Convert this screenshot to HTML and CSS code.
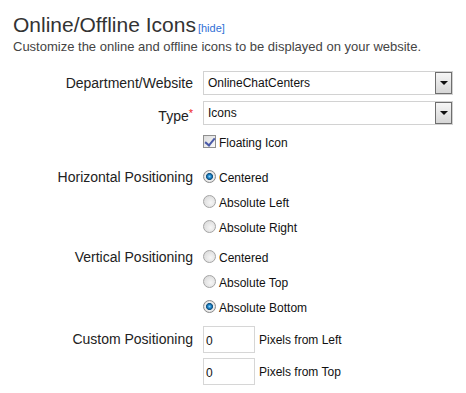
FILE: index.html
```html
<!DOCTYPE html>
<html lang="en">
<head>
  <meta charset="UTF-8" />
  <title>Online/Offline Icons</title>
  <link rel="stylesheet" href="styles.css">
</head>
<body>
  <div class="page">
    <h1>Online/Offline Icons<a href="#" class="hide-link">[hide]</a></h1>
    <p class="subtext">Customize the online and offline icons to be displayed on your website.</p>

    <form class="form">
      <div class="row select-row">
        <label class="label" for="dept">Department/Website</label>
        <div class="select">
          <select id="dept"><option>OnlineChatCenters</option></select>
          <span class="select-btn"></span>
        </div>
      </div>

      <div class="row select-row">
        <label class="label" for="type">Type<span class="req">*</span></label>
        <div class="select">
          <select id="type"><option>Icons</option></select>
          <span class="select-btn"></span>
        </div>
      </div>

      <div class="row check-row">
        <span class="label"></span>
        <label class="option"><input type="checkbox" checked> Floating Icon</label>
      </div>

      <div class="row group">
        <span class="label">Horizontal Positioning</span>
        <div class="options">
          <label class="option"><input type="radio" name="hpos" checked> Centered</label>
          <label class="option"><input type="radio" name="hpos"> Absolute Left</label>
          <label class="option"><input type="radio" name="hpos"> Absolute Right</label>
        </div>
      </div>

      <div class="row group vgroup">
        <span class="label">Vertical Positioning</span>
        <div class="options">
          <label class="option"><input type="radio" name="vpos"> Centered</label>
          <label class="option"><input type="radio" name="vpos"> Absolute Top</label>
          <label class="option"><input type="radio" name="vpos" checked> Absolute Bottom</label>
        </div>
      </div>

      <div class="row custom">
        <span class="label">Custom Positioning</span>
        <div class="options">
          <label class="px-field"><input type="text" class="px-input" value="0"> Pixels from Left</label>
          <label class="px-field"><input type="text" class="px-input" value="0"> Pixels from Top</label>
        </div>
      </div>
    </form>
  </div>
</body>
</html>
```

FILE: styles.css
```css
* {
  box-sizing: border-box;
}

body {
  margin: 0;
  background: #fff;
  color: #333;
  font-family: "Liberation Sans", Arial, sans-serif;
}

.page {
  padding: 13px 0 0 13px;
}

h1 {
  margin: 0;
  font-size: 21px;
  font-weight: normal;
  line-height: 24px;
  height: 24px;
  color: #333;
}

.hide-link {
  margin-left: 2px;
  font-size: 11px;
  color: #2f6fd6;
  text-decoration: none;
}

.subtext {
  margin: 2px 0 0;
  font-size: 13px;
  line-height: 16px;
  color: #444;
}

.form {
  margin-top: 16px;
}

.row {
  display: flex;
}

.label {
  width: 180px;
  flex: none;
  margin-right: 10px;
  text-align: right;
  font-size: 14px;
  color: #222;
}

.req {
  color: #e22;
  font-size: 11px;
  vertical-align: 4px;
}

/* selects */
.select-row {
  height: 24px;
  margin-bottom: 6px;
}

.select-row .label {
  line-height: 24px;
}

.select {
  width: 250px;
  height: 24px;
  display: flex;
  border: 1px solid #d2d2d2;
  background: #fff;
}

.select select {
  flex: 1;
  appearance: none;
  -webkit-appearance: none;
  border: none;
  background: transparent;
  padding: 0 0 0 4px;
  font-family: inherit;
  font-size: 12px;
  color: #111;
  outline: none;
}

.select-btn {
  width: 17px;
  flex: none;
  border: 1px solid #6e6e6e;
  background: linear-gradient(#f6f6f6, #d6d6d6);
  display: flex;
  align-items: center;
  justify-content: center;
}

.select-btn::after {
  content: "";
  border-left: 4px solid transparent;
  border-right: 4px solid transparent;
  border-top: 4px solid #111;
}

/* options */
.check-row {
  height: 24px;
}

.option {
  display: flex;
  align-items: center;
  height: 25px;
  font-size: 12px;
  color: #111;
}

.check-row .option {
  height: 24px;
}

.group {
  margin-top: 10px;
}

.vgroup {
  margin-top: 5px;
}

.group .label {
  line-height: 25px;
}

.options {
  display: flex;
  flex-direction: column;
}

.option input {
  appearance: none;
  -webkit-appearance: none;
  width: 13px;
  height: 13px;
  margin: -3px 3px 0 0;
  position: relative;
}

.option input[type="checkbox"] {
  border: 1px solid #8f8f8f;
  background: linear-gradient(135deg, #dcdcdc, #fafafa);
}

.option input[type="checkbox"]:checked::after {
  content: "";
  position: absolute;
  left: 3px;
  top: 0px;
  width: 4px;
  height: 8px;
  border-right: 2px solid #4a5aa8;
  border-bottom: 2px solid #4a5aa8;
  transform: rotate(40deg);
}

.option input[type="radio"] {
  border-radius: 50%;
  border: 1px solid #a4a4a4;
  background: radial-gradient(circle at 60% 60%, #f6f6f6 0, #d4d4d4 100%);
}

.option input[type="radio"]:checked {
  border-color: #8a8a8a;
  background: radial-gradient(circle at 50% 50%, #8fd6ff 0, #1e86cc 22%, #10507e 40%, #f0f0f0 50%, #d0d0d0 100%);
}

/* custom positioning */
.custom {
  margin-top: 6px;
}

.custom .label {
  line-height: 27px;
}

.px-field {
  display: flex;
  align-items: center;
  font-size: 12px;
  color: #111;
  margin-bottom: 5px;
}

.px-input {
  width: 52px;
  height: 27px;
  margin: 0 4px 0 0;
  padding: 2px 0 0 2px;
  border: 1px solid #d6d6d6;
  font-family: inherit;
  font-size: 12px;
  color: #111;
  outline: none;
}
```
